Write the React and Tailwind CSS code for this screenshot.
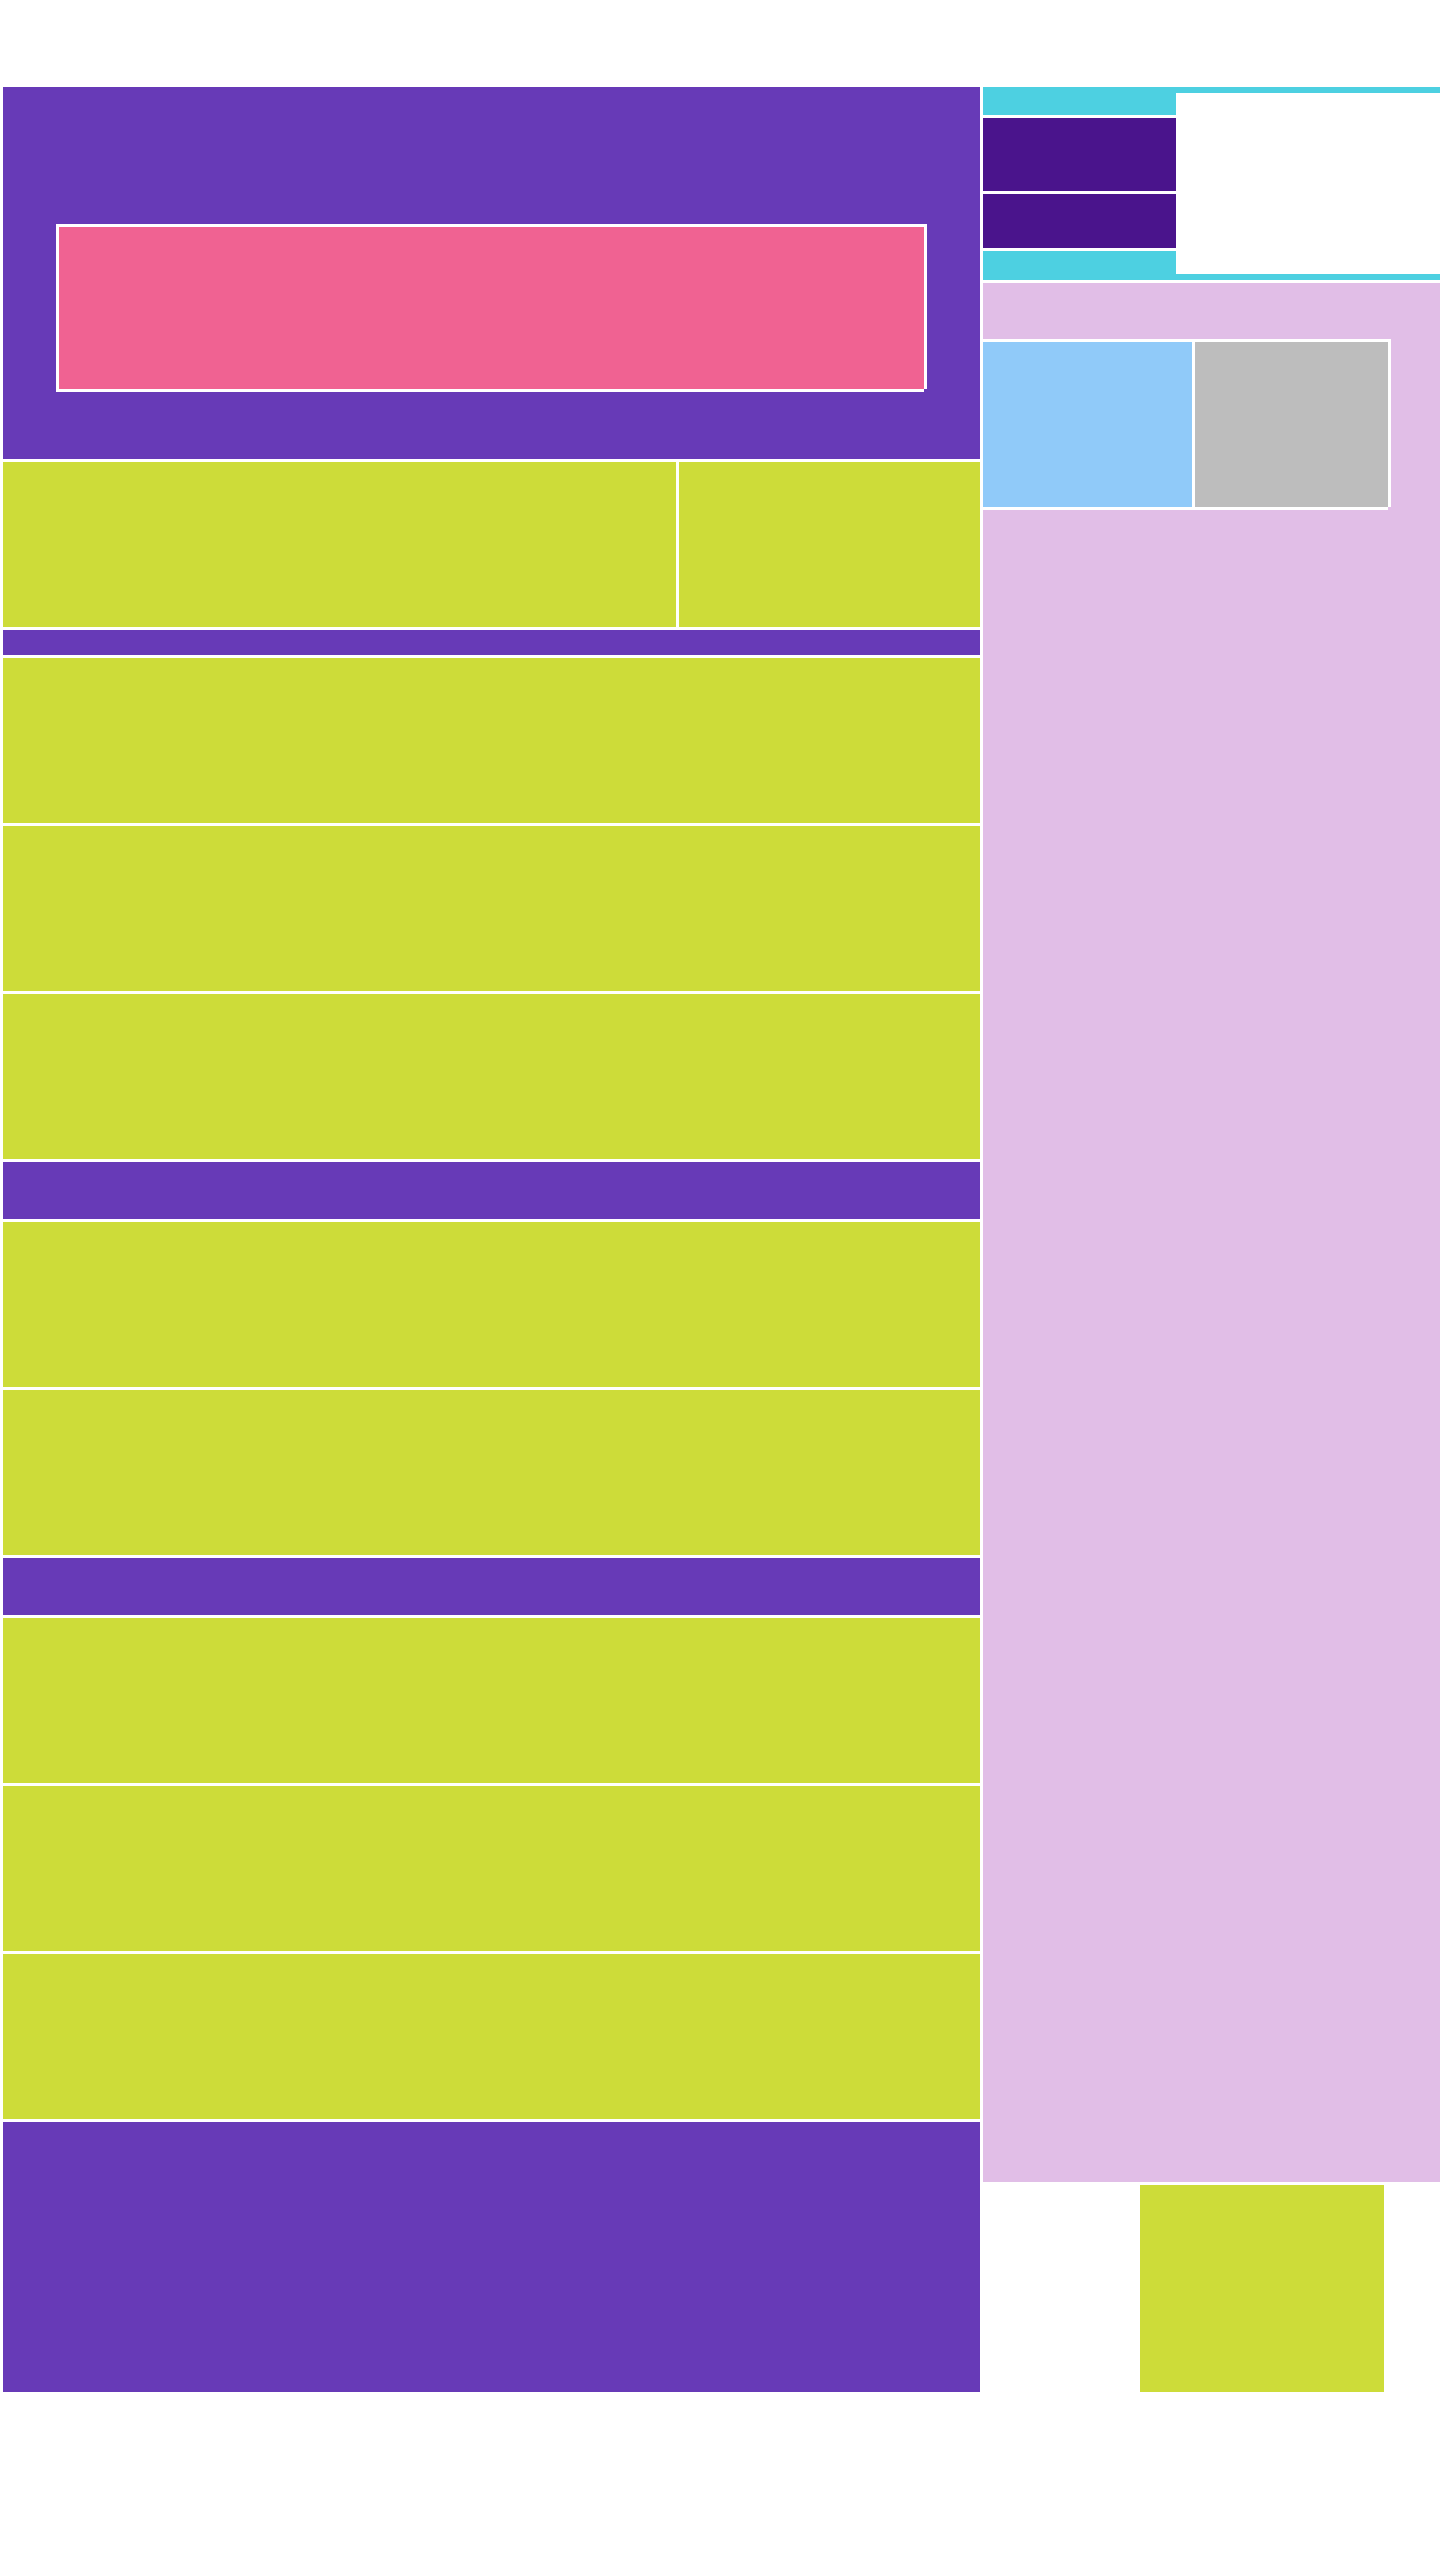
export default function App() {
  const yellow = "h-[165px] bg-[#cddc39] shrink-0";
  return (
    <div className="w-[1440px] h-[2560px] overflow-hidden bg-white">
      <div className="flex items-start gap-[3px] pt-[87px] pl-[3px]">
        {/* Left column */}
        <div className="w-[977px] shrink-0 flex flex-col gap-[3px]">
          <div className="h-[372px] bg-[#673ab7] pt-[137px] pl-[53px]">
            <div className="w-[871px] h-[165px] border-t-[3px] border-x-[3px] border-white">
              <div className="-ml-[3px] w-[868px] h-[165px] border-l-[3px] border-b-[3px] border-white bg-[#f06292]" />
            </div>
          </div>
          <div className="flex gap-[3px] h-[165px]">
            <div className="w-[673px] h-[165px] bg-[#cddc39]" />
            <div className="flex-1 h-[165px] bg-[#cddc39]" />
          </div>
          <div className="h-[25px] bg-[#673ab7]" />
          <div className={yellow} />
          <div className={yellow} />
          <div className={yellow} />
          <div className="h-[57px] bg-[#673ab7]" />
          <div className={yellow} />
          <div className={yellow} />
          <div className="h-[57px] bg-[#673ab7]" />
          <div className={yellow} />
          <div className={yellow} />
          <div className={yellow} />
          <div className="h-[270px] bg-[#673ab7]" />
        </div>

        {/* Right column */}
        <div className="w-[558px] shrink-0 flex flex-col gap-[3px]">
          <div className="h-[193px] bg-[#4dd0e1] flex items-start">
            <div className="w-[193px] shrink-0 flex flex-col mt-[28px]">
              <div className="h-[76px] border-t-[3px] border-white bg-[#4a148c]" />
              <div className="h-[60px] border-y-[3px] border-white bg-[#4a148c]" />
            </div>
            <div className="flex-1 h-[181px] bg-white mt-[6px] mr-[6px]" />
          </div>
          <div className="h-[1899px] bg-[#e1bee7] pt-[56px]">
            <div className="w-[408px] h-[168px] border-t-[3px] border-r-[3px] border-white">
              <div className="flex h-[168px]">
                <div className="w-[209px] h-[168px] border-b-[3px] border-white bg-[#90caf9]" />
                <div className="w-[196px] h-[168px] border-l-[3px] border-b-[3px] border-white bg-[#bdbdbd]" />
              </div>
            </div>
          </div>
          <div className="w-[244px] h-[207px] self-center bg-[#cddc39]" />
        </div>
      </div>
    </div>
  );
}
